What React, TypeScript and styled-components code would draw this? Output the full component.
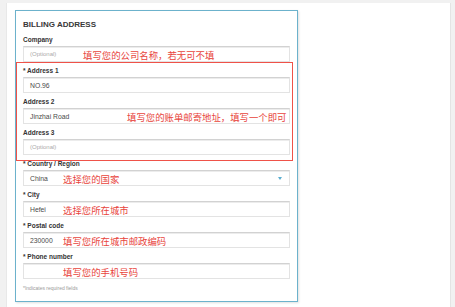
import styled, { createGlobalStyle } from "styled-components";

const GlobalStyle = createGlobalStyle`
  html, body {
    margin: 0;
    padding: 0;
    background: #f1f1f1;
    font-family: "Liberation Sans", Arial, sans-serif;
  }
`;

type Field = {
  label: string;
  value?: string;
  placeholder?: boolean;
  note?: string;
  valueWidth?: number;
  select?: boolean;
};

const companyField: Field = {
  label: "Company",
  value: "(Optional)",
  placeholder: true,
  note: "填写您的公司名称，若无可不填",
  valueWidth: 53,
};

const addressFields: Field[] = [
  { label: "* Address 1", value: "NO.96" },
  {
    label: "Address 2",
    value: "Jinzhai Road",
    note: "填写您的账单邮寄地址，填写一个即可",
    valueWidth: 97,
  },
  { label: "Address 3", value: "(Optional)", placeholder: true },
];

const restFields: Field[] = [
  { label: "* Country / Region", value: "China", note: "选择您的国家", select: true },
  { label: "* City", value: "Hefei", note: "选择您所在城市" },
  { label: "* Postal code", value: "230000", note: "填写您所在城市邮政编码" },
  { label: "* Phone number", value: "", note: "填写您的手机号码" },
];

const FormField = ({ field }: { field: Field }) => (
  <FieldBlock>
    <Label>{field.label}</Label>
    <InputBox>
      <Value $w={field.valueWidth ?? 33} $placeholder={field.placeholder}>
        {field.value}
      </Value>
      {field.note && <Note>{field.note}</Note>}
      {field.select && <Caret />}
    </InputBox>
  </FieldBlock>
);

const App = () => {
  return (
    <>
      <GlobalStyle />
      <Page>
        <Card>
          <Title>BILLING ADDRESS</Title>
          <FormField field={companyField} />
          <Highlight>
            {addressFields.map((f) => (
              <FormField key={f.label} field={f} />
            ))}
          </Highlight>
          {restFields.map((f) => (
            <FormField key={f.label} field={f} />
          ))}
          <Footnote>*Indicates required fields</Footnote>
        </Card>
      </Page>
    </>
  );
};

const Page = styled.div`
  margin: 3px 4px 0 6px;
  height: 304px;
  background: #fff;
  border-left: 1px solid #e8e8e8;
  border-right: 1px solid #e4e4e4;
  padding: 7px 0 0 8px;
  box-sizing: border-box;
`;

const Card = styled.div`
  width: 283px;
  box-sizing: border-box;
  border: 1px solid #6cb2cc;
  box-shadow: 1px 1px 2px rgba(0, 0, 0, 0.12);
  padding: 9px 7px 9px 7px;
  background: #fff;
`;

const Title = styled.div`
  font-size: 8px;
  line-height: 10px;
  font-weight: 700;
  color: #383838;
  margin-bottom: 6px;
`;

const FieldBlock = styled.div`
  margin-bottom: 5px;
`;

const Label = styled.div`
  font-size: 6.5px;
  line-height: 8px;
  font-weight: 700;
  color: #333;
  margin-bottom: 2px;
`;

const InputBox = styled.div`
  height: 16px;
  box-sizing: border-box;
  border: 1px solid #e3e3e3;
  border-top-color: #d2d2d2;
  box-shadow: inset 0 1px 0 #ececec;
  display: flex;
  align-items: center;
  padding: 0 7px 0 6px;
  background: #fff;
`;

const Value = styled.span<{ $w: number; $placeholder?: boolean }>`
  width: ${(p) => p.$w}px;
  flex-shrink: 0;
  font-size: ${(p) => (p.$placeholder ? "6px" : "6.8px")};
  color: ${(p) => (p.$placeholder ? "#aaa" : "#4a4a4a")};
  white-space: nowrap;
`;

const Note = styled.span`
  font-family: "Noto Sans CJK SC", sans-serif;
  font-size: 9.4px;
  line-height: 12px;
  color: #e8443c;
  white-space: nowrap;
  margin-top: 1px;
`;

const Caret = styled.span`
  margin-left: auto;
  width: 0;
  height: 0;
  border-left: 2px solid transparent;
  border-right: 2px solid transparent;
  border-top: 3px solid #5aaed0;
`;

const Highlight = styled.div`
  border: 1px solid #ef5249;
  margin: -5px -3px -1px -7px;
  padding: 4px 2px 0 6px;
`;

const Footnote = styled.div`
  font-size: 5px;
  line-height: 8px;
  color: #9a9a9a;
  margin-top: 2px;
`;

export default App;
